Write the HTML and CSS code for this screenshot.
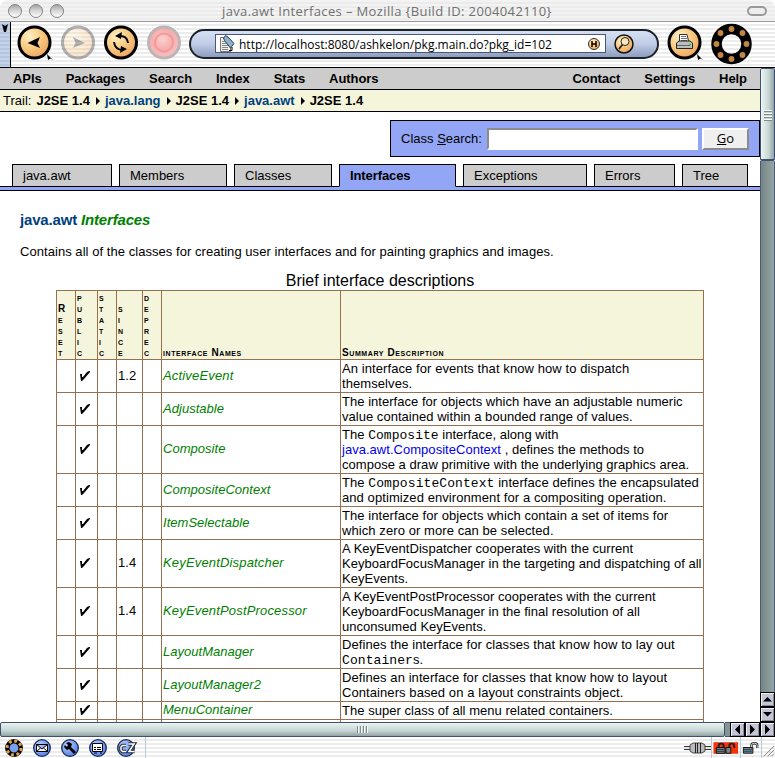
FILE: index.html
```html
<!DOCTYPE html>
<html lang="en">
<head>
<meta charset="utf-8">
<title>java.awt Interfaces</title>
<link rel="stylesheet" href="styles.css">
</head>
<body>
<svg class="defs" width="0" height="0">
  <defs>
    <radialGradient id="amber" cx=".35" cy=".3" r=".8"><stop offset="0" stop-color="#fff0c8"/><stop offset=".45" stop-color="#f8cd83"/><stop offset="1" stop-color="#ee9d5c"/></radialGradient>
    <radialGradient id="rose" cx=".45" cy=".4" r=".6"><stop offset="0" stop-color="#fbd0d0"/><stop offset=".55" stop-color="#f6adad"/><stop offset="1" stop-color="#f5c4c4"/></radialGradient>
    <radialGradient id="sky" cx=".35" cy=".3" r=".8"><stop offset="0" stop-color="#b6cbff"/><stop offset="1" stop-color="#4e7be6"/></radialGradient>
    <linearGradient id="pearl" x1="0" y1="0" x2="0" y2="1"><stop offset="0" stop-color="#a0a0a0"/><stop offset=".5" stop-color="#d8d8d8"/><stop offset="1" stop-color="#fff"/></linearGradient>
    <symbol id="check" viewBox="0 0 10 11"><path d="M0 4H2V7H3L7 2L9 1H10V2L4 9L2 11H1Z"/></symbol>
  </defs>
</svg>
<div class="window">
  <header class="titlebar">
    <svg class="lights" width="70" height="21" viewBox="0 0 70 21" fill="url(#pearl)" stroke="#858585"><circle cx="15" cy="11" r="6.500"/><circle cx="36" cy="11" r="6.500"/><circle cx="57" cy="11" r="6.500"/></svg>
    <h1 class="title">java.awt Interfaces – Mozilla {Build ID: 2004042110}</h1>
    <span class="pill"></span>
  </header>

  <div class="toolbar">
    <div class="grippy"><svg width="10" height="44"><path d="M2 2L5 4L8 2L6 10H4Z"/></svg></div>
    <svg class="tool back" width="38" height="44" viewBox="0 0 38 44"><circle cx="18.500" cy="20.500" r="15.500" fill="url(#amber)" stroke="#000" stroke-width="3"/><path d="M11.500 21L24 15L21.500 21L24 26Z"/><path d="M31 32L37 38L34.500 36.500L32 38Z"/></svg>
    <svg class="tool fwd" width="36" height="44" viewBox="0 0 36 44" opacity=".3"><circle cx="18" cy="20.500" r="15.500" fill="url(#amber)" stroke="#000" stroke-width="3"/><path d="M25 21L13 15L15.500 21L13 26Z"/></svg>
    <svg class="tool reload" width="36" height="44" viewBox="0 0 36 44"><circle cx="18" cy="20.500" r="15.500" fill="url(#amber)" stroke="#000" stroke-width="3"/><path d="M16 14Q24 13 25 21M20 28Q12 28 11 20" fill="none" stroke="#000" stroke-width="2"/><path d="M12 14L19 10L18 17ZM24 27L17 31L18 24Z"/></svg>
    <svg class="tool stop" width="36" height="44" viewBox="0 0 36 44"><circle cx="18" cy="20.500" r="15.500" fill="url(#rose)" stroke="#bdb5b5" stroke-width="3"/><circle cx="18" cy="20.500" r="9" fill="none" stroke="#f29a9a" stroke-width="2"/></svg>
    <div class="location">
      <div class="url">
        <svg width="18" height="18" viewBox="0 0 18 18"><path d="M1.500 2.500H8L11.500 7V16.500H1.500Z" fill="#eee" stroke="#777"/><path d="M3 6.500H7M3 8.500H9M3 10.500H9M3 12.500H9M3 14.500H9" stroke="#888"/><path d="M4.500 3L6.500 .500L9 2L15 8.500L11.500 13L5.500 5.500Z" fill="#8fb0c8" stroke="#2a4256"/><path d="M10 15.500H13V12" fill="none" stroke="#000"/></svg>
        <span class="address">http://localhost:8080/ashkelon/pkg.main.do?pkg_id=102</span>
        <svg width="14" height="14" viewBox="0 0 14 14"><circle cx="6" cy="7" r="5.500" fill="url(#amber)" stroke="#333"/><path d="M4 4V10M8 4V10M4 7H8" stroke="#000" stroke-width="1.500"/></svg>
      </div>
      <svg class="find" width="22" height="22" viewBox="0 0 22 22"><circle cx="11" cy="11" r="9" fill="url(#amber)" stroke="#111" stroke-width="1.500"/><circle cx="12" cy="8.500" r="4" fill="#fbe7be" stroke="#222"/><path d="M9.500 11.500L6 16" stroke="#222" stroke-width="1.800"/></svg>
    </div>
    <svg class="tool print" width="38" height="44" viewBox="0 0 38 44"><circle cx="18.500" cy="20.500" r="15.500" fill="url(#amber)" stroke="#000" stroke-width="3"/><path d="M13.500 12.500H21L23 21H13.500Z" fill="#fff" stroke="#333"/><path d="M15 14.500H20M15 16.500H21M15 18.500H21" stroke="#777"/><path d="M10.500 21L13 19H24L26.500 21V26.500H10.500Z" fill="#b9c0bf" stroke="#222"/><path d="M11 23.500H24" stroke="#666"/><path d="M23 22.500H25" stroke="#2c3" stroke-width="1.500"/><path d="M31 32L37 38L34.500 36.500L32 38Z"/></svg>
    <svg class="throbber" width="42" height="44" viewBox="0 0 42 44"><circle cx="20.500" cy="22" r="15" fill="none" stroke="#000" stroke-width="10.500"/><g fill="#c38543"><circle cx="20.500" cy="7" r="2.900"/><circle cx="31.500" cy="11" r="2.900"/><circle cx="35.500" cy="22" r="2.900"/><circle cx="31.500" cy="33" r="2.900"/><circle cx="20.500" cy="37" r="2.900"/><circle cx="9.500" cy="33" r="2.900"/><circle cx="5.500" cy="22" r="2.900"/><circle cx="9.500" cy="11" r="2.900"/></g></svg>
  </div>

  <div class="view">
    <main class="page">
      <nav class="menu">
        <a>APIs</a><a>Packages</a><a>Search</a><a>Index</a><a>Stats</a><a>Authors</a>
        <a class="push">Contact</a><a>Settings</a><a>Help</a>
      </nav>
      <div class="trail"><span>Trail:</span><b>J2SE 1.4</b><i class="sep"></i><b class="link">java.lang</b><i class="sep"></i><b>J2SE 1.4</b><i class="sep"></i><b class="link">java.awt</b><i class="sep"></i><b>J2SE 1.4</b></div>
      <form class="search">
        <label>Class <u>S</u>earch:</label><input type="text"><button type="button"><u>G</u>o</button>
      </form>
      <nav class="tabs">
        <a class="t1">java.awt</a><a class="t2">Members</a><a class="t3">Classes</a><a class="t4 on">Interfaces</a><a class="t5">Exceptions</a><a class="t6">Errors</a><a class="t7">Tree</a>
      </nav>
      <div class="bar"></div>
      <h2><span>java.awt</span> <em>Interfaces</em></h2>
      <p class="intro">Contains all of the classes for creating user interfaces and for painting graphics and images.</p>
      <table>
        <caption>Brief interface descriptions</caption>
        <colgroup><col class="c1"><col class="c2"><col class="c3"><col class="c4"><col class="c5"><col class="c6"><col class="c7"></colgroup>
        <thead><tr>
          <th>R<br>e<br>s<br>e<br>t</th><th>p<br>u<br>b<br>l<br>i<br>c</th><th>s<br>t<br>a<br>t<br>i<br>c</th><th>s<br>i<br>n<br>c<br>e</th><th>d<br>e<br>p<br>r<br>e<br>c</th><th>interface Names</th><th>Summary Description</th>
        </tr></thead>
        <tbody>
          <tr><td></td><td><svg><use href="#check"/></svg></td><td></td><td>1.2</td><td></td><td class="name wide">ActiveEvent</td><td class="loose">An interface for events that know how to dispatch<br>themselves.</td></tr>
          <tr><td></td><td><svg><use href="#check"/></svg></td><td></td><td></td><td></td><td class="name">Adjustable</td><td>The interface for objects which have an adjustable numeric<br>value contained within a bounded range of values.</td></tr>
          <tr><td></td><td><svg><use href="#check"/></svg></td><td></td><td></td><td></td><td class="name">Composite</td><td>The <code>Composite</code> interface, along with<br><a>java.awt.CompositeContext</a> , defines the methods to<br>compose a draw primitive with the underlying graphics area.</td></tr>
          <tr><td></td><td><svg><use href="#check"/></svg></td><td></td><td></td><td></td><td class="name">CompositeContext</td><td class="loose">The <code>CompositeContext</code> interface defines the encapsulated<br>and optimized environment for a compositing operation.</td></tr>
          <tr><td></td><td><svg><use href="#check"/></svg></td><td></td><td></td><td></td><td class="name">ItemSelectable</td><td class="loose">The interface for objects which contain a set of items for<br>which zero or more can be selected.</td></tr>
          <tr><td></td><td><svg><use href="#check"/></svg></td><td></td><td>1.4</td><td></td><td class="name wide">KeyEventDispatcher</td><td>A KeyEventDispatcher cooperates with the current<br>KeyboardFocusManager in the targeting and dispatching of all<br>KeyEvents.</td></tr>
          <tr><td></td><td><svg><use href="#check"/></svg></td><td></td><td>1.4</td><td></td><td class="name wide">KeyEventPostProcessor</td><td>A KeyEventPostProcessor cooperates with the current<br>KeyboardFocusManager in the final resolution of all<br>unconsumed KeyEvents.</td></tr>
          <tr><td></td><td><svg><use href="#check"/></svg></td><td></td><td></td><td></td><td class="name">LayoutManager</td><td class="loose">Defines the interface for classes that know how to lay out<br><code>Container</code>s.</td></tr>
          <tr><td></td><td><svg><use href="#check"/></svg></td><td></td><td></td><td></td><td class="name">LayoutManager2</td><td class="loose">Defines an interface for classes that know how to layout<br>Containers based on a layout constraints object.</td></tr>
          <tr><td></td><td><svg><use href="#check"/></svg></td><td></td><td></td><td></td><td class="name">MenuContainer</td><td>The super class of all menu related containers.</td></tr>
          <tr><td></td><td></td><td></td><td></td><td></td><td></td><td></td></tr>
        </tbody>
      </table>
    </main>
    <div class="vscroll">
      <div class="vthumb"><i class="grip"></i></div>
      <div class="vtrack"></div>
      <span class="arrow"><svg><path d="M2 8.500L6.500 4L11 8.500Z"/></svg></span>
      <span class="arrow"><svg><path d="M2 4L6.500 8.500L11 4Z"/></svg></span>
    </div>
  </div>
  <div class="hscroll">
    <div class="hthumb"><i class="vgrip"></i></div>
    <div class="htrack"></div>
    <span class="arrow"><svg><path d="M9 1.500L4 6.500L9 11.500Z"/></svg></span>
    <span class="arrow"><svg><path d="M4 1.500L9 6.500L4 11.500Z"/></svg></span>
    <span class="arrow"><svg><path d="M4 1.500L9 6.500L4 11.500Z"/></svg></span>
  </div>

  <footer class="status">
    <svg width="145" height="21" viewBox="0 0 145 21">
      <circle cx="14" cy="11" r="6.700" fill="#78a0f0" stroke="#000" stroke-width="4.500"/><circle cx="14" cy="11" r="7" fill="none" stroke="#e2a04a" stroke-width="3" stroke-dasharray="2.900 2.600"/>
      <g fill="url(#sky)" stroke="#16264d" stroke-width="1.300"><circle cx="42" cy="11" r="8.300"/><circle cx="70" cy="11" r="8.300"/><circle cx="98" cy="11" r="8.300"/><circle cx="126" cy="11" r="8.300"/></g>
      <path d="M36.500 7.500H47.500V14.500H36.500ZM36.500 7.500L42 12L47.500 7.500M36.500 14.500L40.500 11M47.500 14.500L43.500 11" fill="#fff" stroke="#000"/>
      <path d="M66 6L68 8L67 10L65 8L64 10L67 13L69 12L74 17L76 15L71 10L72 7L69 5Z"/>
      <path d="M92.500 6.500H102.500V14.500H92.500Z" fill="#fff" stroke="#000"/><path d="M94 10.500H96M97 10.500H101M94 12.500H96M97 12.500H101M94 16H97M100 16H102" stroke="#000"/>
      <path d="M126 8.500H122.500L121 10V13L122.500 14.500H126M128.500 7H134L129 14.500H134.500" fill="none" stroke="#222b38" stroke-width="3.600"/><path d="M126 8.500H122.500L121 10V13L122.500 14.500H126M128.500 7H134L129 14.500H134.500" fill="none" stroke="#fff" stroke-width="1.500"/>
    </svg>
    <span class="message"></span>
    <svg class="net" width="27" height="21" viewBox="0 0 27 21"><path d="M0 9.500H8M19 9.500H27M0 12.500H8M19 12.500H27" stroke="#333"/><path d="M0 11H8M19 11H27" stroke="#ddd"/><path d="M6 8L9 6H18L21 8V14L18 16H9L6 14Z" fill="#bbb" stroke="#444"/><path d="M11.500 6V16M13.500 6V16M16.500 6V16" stroke="#222"/></svg>
    <svg class="cookie" width="29" height="21" viewBox="0 0 29 21"><path d="M1.500 5H27V17H1.500Z" fill="#f6330b"/><path d="M7 10V8Q7 6.500 9.500 6.500Q12 6.500 12 8V10M18 10V8Q18 6.500 20.500 6.500Q23 6.500 23 9V11" fill="none" stroke="#222" stroke-width="2"/><path d="M4.500 10.500H13.500V16.500H4.500ZM14.500 10.500H19.500V16.500H14.500Z" fill="#71838b" stroke="#111"/><path d="M5 12.500H13M5 14.500H13" stroke="#26363c"/></svg>
    <svg class="lock" width="21" height="21" viewBox="0 0 21 21"><path d="M11 10V8Q11 6 14 6Q17 6 17 8V11" fill="none" stroke="#222" stroke-width="2.500"/><path d="M11 10V8Q11 6 14 6Q17 6 17 8V11" fill="none" stroke="#ddd"/><path d="M2.500 10.500H12.500V16.500H2.500Z" fill="#789" stroke="#111"/><path d="M3 12.500H12M3 14.500H12" stroke="#244"/></svg>
    <svg class="resize" width="14" height="21" viewBox="0 0 14 21"><path d="M2 20L13 9M6 20L13 13M10 20L13 17" stroke="#777"/></svg>
  </footer>
</div>
</body>
</html>
```
FILE: styles.css
```css
* { box-sizing: border-box; }
body { margin: 0; background: #fff; font: 13px/15px "Liberation Sans", Arial, sans-serif; color: #000; overflow: hidden; }
svg { display: block; flex: none; }
.defs { position: absolute; }
.window { width: 775px; height: 758px; display: flex; flex-direction: column; overflow: hidden; }

.titlebar { height: 22px; flex: none; display: flex; align-items: center; border-bottom: 1px solid #999; border-radius: 8px 8px 0 0; background: repeating-linear-gradient(#f3f3f3 0 2px, #ebebeb 2px 4px); }
.title { flex: 1; margin: 0; padding-left: 152px; font: 13px/20px "Open Sans", "Noto Sans", sans-serif; letter-spacing: .37px; color: #707070; white-space: nowrap; }
.pill { width: 20px; height: 10px; margin-right: 8px; border: 2px solid #999; border-radius: 5px; background: #eee; }

.toolbar { height: 46px; flex: none; display: flex; border-bottom: 1px solid #000; background: repeating-linear-gradient(#fff 0 2px, #ececec 2px 4px); }
.grippy { width: 11px; border-right: 1px solid #000; background: repeating-linear-gradient(#c4d3ea 0 2px, #b5c5e0 2px 4px); }
.back { margin-left: 5px; }
.fwd { margin-left: 6px; }
.reload, .stop { margin-left: 7px; }
.location { width: 470px; height: 30px; margin: 7px 0 0 7px; display: flex; align-items: center; padding-left: 24px; border: 2px solid #1b2229; border-radius: 15px; background: linear-gradient(#d5e0f3, #c1cde6 50%, #8d9dc0); }
.url { width: 391px; height: 19px; margin-top: -1px; display: flex; align-items: center; background: #fff; border: 1px solid #4b5777; padding: 0 3px; }
.address { flex: 1; padding: 1px 0 0 2px; font: 12px/17px "Open Sans", "Noto Sans", sans-serif; white-space: nowrap; }
.find { margin-left: 7px; }
.print { margin-left: 7px; }
.throbber { margin-left: 7px; }

.view { height: 654px; flex: none; display: flex; }
.page { width: 760px; height: 654px; overflow: hidden; }
.menu { height: 22px; display: flex; gap: 24px; padding: 0 13px; background: #ccc; border-bottom: 1px solid #000; font-weight: bold; line-height: 21px; letter-spacing: -.07px; }
.push { margin-left: auto; }
.trail { height: 22px; display: flex; align-items: center; padding-left: 3px; background: #f5f5dc; border-bottom: 1px solid #000; }
.trail b:nth-child(2) { margin-left: 5px; }
.link { color: #003f7d; }
.sep { margin: 1px 5px 0 6px; border-left: 4px solid #000; border-top: 4px solid transparent; border-bottom: 4px solid transparent; }
.search { width: 370px; height: 37px; margin: 8px 0 0 390px; display: flex; align-items: center; padding: 0 10px; border: 1px solid #000; background: #93a5f5; }
.search label { width: 86px; white-space: nowrap; }
.search input { width: 211px; height: 22px; padding: 0; border: 2px solid; border-color: #8c8c8c #fff #fff #8c8c8c; background: #fff; border-radius: 0; }
.search button { width: 47px; height: 22px; margin-left: 4px; padding: 0; border: 2px solid; border-color: #fff #8c8c8c #8c8c8c #fff; border-radius: 0; background: #efefef; font: 13px/17px "Open Sans", sans-serif; }
.tabs { margin-top: 7px; padding-left: 12px; height: 23px; display: flex; gap: 7px; background: linear-gradient(#000, #000) bottom / 100% 1px no-repeat; }
.tabs a { height: 23px; padding-left: 10px; border: 1px solid #000; background: #ccc; line-height: 22px; }
.tabs .on { background: #93a5f5; border-bottom-color: #93a5f5; font-weight: bold; letter-spacing: -.1px; }
.t1 { width: 100px; } .t2 { width: 108px; } .t3 { width: 98px; } .t4 { width: 117px; }
.t5 { width: 124px; } .t6 { width: 81px; } .t7 { width: 66px; }
.bar { height: 4px; background: #93a5f5; border-bottom: 1px solid #000; }
h2 { margin: 20px 0 0 20px; font-size: 15px; line-height: 18px; letter-spacing: -.17px; }
h2 span { color: #003f7d; }
h2 em { color: #008000; }
.intro { margin: 15px 0 0 20px; white-space: nowrap; letter-spacing: .05px; }

table { width: 648px; margin: 12px 0 0 56px; table-layout: fixed; border-collapse: separate; border-spacing: 0; border-left: 1px solid #976f51; letter-spacing: .03px; }
caption { height: 19px; font-size: 16px; line-height: 19px; letter-spacing: 0; }
.c1, .c3, .c5 { width: 19px; }
.c2 { width: 22px; }
.c4 { width: 26px; }
.c6 { width: 179px; }
.c7 { width: 363px; }
th, td { padding: 1px; text-align: left; white-space: nowrap; border-right: 1px solid #976f51; border-bottom: 1px solid #976f51; height: 18px; }
th { height: 70px; border-top: 1px solid #976f51; background: #f5f5dc; vertical-align: bottom; font-size: 10px; line-height: 11px; font-variant: small-caps; letter-spacing: .6px; }
td svg { width: 10px; height: 11px; margin-left: 3px; }
td:nth-child(-n+6) { padding: 0 1px 2px; }
.name { color: #008000; font-style: italic; }
.wide { letter-spacing: .17px; }
.loose { letter-spacing: .08px; }
td a { color: #0000e6; }
code { font: 13px/13px "Liberation Mono", monospace; }

.vscroll { width: 15px; display: flex; flex-direction: column; }
.vthumb { height: 93px; border: 1px solid #405070; border-bottom-width: 2px; border-radius: 2px; background: linear-gradient(90deg, #edf6f4, #c5d5d3 60%, #90a3a2); display: flex; justify-content: center; padding-top: 41px; }
.grip { width: 8px; height: 11px; background: repeating-linear-gradient(#fff 0 1px, #7c8d8c 1px 2px, #c5d5d3 2px 3px); }
.vtrack { flex: 1; border: solid #4b5a73; border-width: 0 1px; background: linear-gradient(90deg, #748685, #95a5a4); }
.arrow { width: 15px; height: 15px; flex: none; border: 1px solid #000; background: #c3c7d5; box-shadow: inset 1px 1px #eef0f6, inset -1px -1px #858b9d; }
.arrow svg { width: 13px; height: 13px; }
.hscroll { height: 15px; flex: none; display: flex; }
.hthumb { width: 725px; border: 1px solid #405070; border-radius: 2px; background: linear-gradient(#eaf4f2, #c5d5d3 60%, #90a3a2); display: flex; justify-content: center; align-items: center; }
.vgrip { width: 11px; height: 7px; background: repeating-linear-gradient(90deg, #7c8d8c 0 1px, #fff 1px 2px, #c5d5d3 2px 3px); }
.htrack { flex: 1; background: #849594; border: solid #405070; border-width: 1px 0; }

.status { height: 21px; flex: none; display: flex; background: repeating-linear-gradient(#fff 0 2px, #ececec 2px 4px); }
.message { flex: 1; border-left: 1px solid #b9c7dc; }
.cookie, .lock, .resize { border-left: 1px solid #b9c7dc; }
```
